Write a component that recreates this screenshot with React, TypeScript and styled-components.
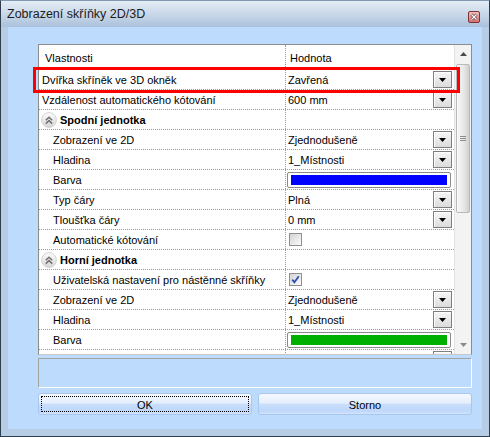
import * as React from 'react'
import styled, { createGlobalStyle } from 'styled-components'

const GlobalStyle = createGlobalStyle`
  html, body {
    margin: 0;
    padding: 0;
  }
  body {
    width: 490px;
    height: 437px;
    overflow: hidden;
    font-family: 'Liberation Sans', Arial, sans-serif;
    font-size: 11px;
    color: #000;
  }
`

type Value =
  | { type: 'select'; text: string }
  | { type: 'color'; color: string }
  | { type: 'check'; checked: boolean }
  | { type: 'none' }

type RowKind = 'top' | 'section' | 'sub'

type RowData = { kind: RowKind; label: string; value: Value }

// the last row is scrolled off: only the top of its drop-down shows
const rows: RowData[] = [
  { kind: 'top', label: 'Dvířka skříněk ve 3D okněk', value: { type: 'select', text: 'Zavřená' } },
  { kind: 'top', label: 'Vzdálenost automatického kótování', value: { type: 'select', text: '600 mm' } },
  { kind: 'section', label: 'Spodní jednotka', value: { type: 'none' } },
  { kind: 'sub', label: 'Zobrazení ve 2D', value: { type: 'select', text: 'Zjednodušeně' } },
  { kind: 'sub', label: 'Hladina', value: { type: 'select', text: '1_Místnosti' } },
  { kind: 'sub', label: 'Barva', value: { type: 'color', color: '#0000ff' } },
  { kind: 'sub', label: 'Typ čáry', value: { type: 'select', text: 'Plná' } },
  { kind: 'sub', label: 'Tloušťka čáry', value: { type: 'select', text: '0 mm' } },
  { kind: 'sub', label: 'Automatické kótování', value: { type: 'check', checked: false } },
  { kind: 'section', label: 'Horní jednotka', value: { type: 'none' } },
  { kind: 'sub', label: 'Uživatelská nastavení pro nástěnné skříňky', value: { type: 'check', checked: true } },
  { kind: 'sub', label: 'Zobrazení ve 2D', value: { type: 'select', text: 'Zjednodušeně' } },
  { kind: 'sub', label: 'Hladina', value: { type: 'select', text: '1_Místnosti' } },
  { kind: 'sub', label: 'Barva', value: { type: 'color', color: '#00b000' } },
  { kind: 'sub', label: '', value: { type: 'select', text: '' } },
]

const Window = styled.div`
  position: relative;
  box-sizing: border-box;
  width: 490px;
  height: 437px;
  border: 1px solid #2e3e4e;
  border-top-color: #8198b0;
  background: #b7cde5;
  display: flex;
  flex-direction: column;
`

const TitleBar = styled.div`
  flex: none;
  height: 26px;
  display: flex;
  align-items: flex-start;
  justify-content: space-between;
  padding: 0 9px 0 6px;
  background: linear-gradient(#e4ecf5, #c6d6e8 55%, #a9c1db);
  color: #1c1c1c;
  font-size: 12.5px;
`

const Title = styled.span`
  margin-top: 6px;
`

const CloseBtn = styled.div`
  margin-top: 10px;
  width: 12px;
  height: 12px;
  display: flex;
`

const Client = styled.div`
  flex: 1;
  margin: 0 7px 7px;
  padding: 17px 10px 14px 30px;
  background: #bddbfd;
  display: flex;
  flex-direction: column;
  min-height: 0;
`

const Grid = styled.div`
  flex: none;
  height: 311px;
  box-sizing: border-box;
  border: 1px solid #8c8c8c;
  border-bottom-color: #c8c8c8;
  background: #fff;
  display: flex;
  overflow: hidden;
`

const GridBody = styled.div`
  flex: 1;
  display: flex;
  flex-direction: column;
  overflow: hidden;
`

const Row = styled.div<{ $header?: boolean }>`
  flex: none;
  box-sizing: border-box;
  height: ${(p) => (p.$header ? 25 : 20)}px;
  display: flex;
  border-bottom: 1px dotted #9a9a9a;
`

const LabelCell = styled.div<{ $kind: RowKind }>`
  flex: none;
  box-sizing: border-box;
  width: 247px;
  display: flex;
  align-items: center;
  gap: 3px;
  border-right: 1px dotted #9a9a9a;
  padding-left: ${(p) => (p.$kind === 'sub' ? 14 : p.$kind === 'section' ? 2 : 3)}px;
  font-weight: ${(p) => (p.$kind === 'section' ? 700 : 400)};
  white-space: nowrap;
  overflow: hidden;
`

const HeaderLabel = styled.span`
  padding-left: 3px;
  padding-top: 2px;
`

const ValueCell = styled.div`
  flex: 1;
  display: flex;
  align-items: center;
  justify-content: space-between;
  padding: 0 2px 0 1px;
  min-width: 0;
`

const ValueText = styled.span`
  padding-left: 1px;
`

const DropBtn = styled.div`
  flex: none;
  box-sizing: border-box;
  width: 19px;
  height: 17px;
  margin-left: auto;
  display: flex;
  align-items: center;
  justify-content: center;
  border: 1px solid #7e7e7e;
  box-shadow: inset 1px 1px #fdfdfd;
  background: linear-gradient(#f6f6f6, #dcdcdc);
`

const Swatch = styled.div`
  flex: 1;
  box-sizing: border-box;
  height: 16px;
  margin-right: 1px;
  padding: 2px 3px;
  border: 1px solid #8a8a8a;
  border-radius: 2px;
  background: #fff;
  display: flex;
`

const SwatchFill = styled.div<{ $color: string }>`
  flex: 1;
  background: ${(p) => p.$color};
`

const CheckBox = styled.div`
  box-sizing: border-box;
  width: 13px;
  height: 13px;
  margin-left: 2px;
  border: 1px solid #8f8f8f;
  background: linear-gradient(135deg, #d4d4d4, #fbfbfb);
  display: flex;
  align-items: center;
  justify-content: center;
`

const ScrollBar = styled.div`
  flex: none;
  width: 17px;
  box-sizing: border-box;
  border-left: 1px solid #e3e3e3;
  background: #f3f3f3;
  display: flex;
  flex-direction: column;
`

const ScrollArrow = styled.div`
  flex: none;
  height: 18px;
  display: flex;
  align-items: center;
  justify-content: center;
`

const Thumb = styled.div`
  flex: none;
  box-sizing: border-box;
  height: 149px;
  width: 14px;
  margin: 1px 0 0 1px;
  border: 1px solid #b9b9b9;
  border-radius: 2px;
  background: linear-gradient(90deg, #fafafa, #e6e6e6 60%, #cfcfcf);
  display: flex;
  align-items: center;
  justify-content: center;
`

const ScrollSpacer = styled.div`
  flex: 1;
`

const InfoPanel = styled.div`
  flex: none;
  height: 30px;
  margin-top: 3px;
  box-sizing: border-box;
  border: 1px solid;
  border-color: #a3a3a3 #fff #fff #a3a3a3;
`

const ButtonRow = styled.div`
  flex: none;
  margin-top: 5px;
  height: 22px;
  display: flex;
  gap: 6px;
`

const Button = styled.div<{ $focused?: boolean }>`
  position: relative;
  flex: 1;
  box-sizing: border-box;
  display: flex;
  align-items: center;
  justify-content: center;
  border: 1px solid #a9c7ee;
  border-radius: 3px;
  background: linear-gradient(#f6f9ff 0%, #e4eefc 45%, #c8defb 52%, #bed7fa 85%, #d3e4fc 100%);
  font-size: 11px;
  padding-top: 1px;

  &::after {
    content: '';
    display: ${(p) => (p.$focused ? 'block' : 'none')};
    position: absolute;
    inset: 2px;
    border: 1px dotted #000;
  }
`

const Highlight = styled.div`
  position: absolute;
  left: 32px;
  top: 66px;
  width: 427px;
  height: 26px;
  box-sizing: border-box;
  border: 3px solid #ff0000;
  pointer-events: none;
`

const Arrow = ({ color = '#000' }: { color?: string }) => (
  <svg width="7" height="4" viewBox="0 0 7 4">
    <path d="M0 0H7L3.5 4Z" fill={color} />
  </svg>
)

const SectionIcon = () => (
  <svg width="16" height="16" viewBox="0 0 16 16">
    <defs>
      <linearGradient id="secg" x1="0" y1="0" x2="0" y2="1">
        <stop offset="0" stopColor="#fdfdfd" />
        <stop offset="1" stopColor="#d6d6d6" />
      </linearGradient>
    </defs>
    <circle cx="8" cy="8" r="7.4" fill="url(#secg)" stroke="#d2d2d2" strokeWidth="1" />
    <path d="M4.8 8.2L8 5.2L11.2 8.2M4.8 11.6L8 8.6L11.2 11.6" fill="none" stroke="#707070" strokeWidth="1.5" />
  </svg>
)

const CloseIcon = () => (
  <svg width="12" height="12" viewBox="0 0 12 12">
    <defs>
      <linearGradient id="clg" x1="0" y1="0" x2="0" y2="1">
        <stop offset="0" stopColor="#f3c2c2" />
        <stop offset="1" stopColor="#d57070" />
      </linearGradient>
    </defs>
    <rect x="0.5" y="0.5" width="11" height="11" rx="1.5" fill="url(#clg)" stroke="#7d3434" />
    <path d="M3.5 3.5L8.5 8.5M8.5 3.5L3.5 8.5" stroke="#6a3030" strokeWidth="2.6" />
    <path d="M3.5 3.5L8.5 8.5M8.5 3.5L3.5 8.5" stroke="#fff" strokeWidth="1.3" />
  </svg>
)

const Grip = () => (
  <svg width="6" height="5" viewBox="0 0 6 5">
    <path d="M0 0.5H6M0 2.5H6M0 4.5H6" stroke="#8d8d8d" strokeWidth="1" />
  </svg>
)

const ValueView = ({ value }: { value: Value }) => {
  switch (value.type) {
    case 'select':
      return (
        <>
          {value.text && <ValueText>{value.text}</ValueText>}
          <DropBtn>
            <Arrow />
          </DropBtn>
        </>
      )
    case 'color':
      return (
        <Swatch>
          <SwatchFill $color={value.color} />
        </Swatch>
      )
    case 'check':
      return (
        <CheckBox>
          {value.checked && (
            <svg width="11" height="11" viewBox="0 0 11 11">
              <path d="M2.2 5.6L4.4 8.2L8.8 2.2" fill="none" stroke="#2d4fae" strokeWidth="1.8" />
            </svg>
          )}
        </CheckBox>
      )
    default:
      return null
  }
}

export default function App() {
  return (
    <Window>
      <GlobalStyle />
      <TitleBar>
        <Title>Zobrazení skříňky 2D/3D</Title>
        <CloseBtn>
          <CloseIcon />
        </CloseBtn>
      </TitleBar>
      <Client>
        <Grid>
          <GridBody>
            <Row $header>
              <LabelCell $kind="top">
                <HeaderLabel>Vlastnosti</HeaderLabel>
              </LabelCell>
              <ValueCell>
                <HeaderLabel>Hodnota</HeaderLabel>
              </ValueCell>
            </Row>
            {rows.map((r, i) => (
              <Row key={i}>
                <LabelCell $kind={r.kind}>
                  {r.kind === 'section' && <SectionIcon />}
                  {r.label}
                </LabelCell>
                <ValueCell>
                  <ValueView value={r.value} />
                </ValueCell>
              </Row>
            ))}
          </GridBody>
          <ScrollBar>
            <ScrollArrow>
              <svg width="7" height="4" viewBox="0 0 7 4">
                <path d="M0 4H7L3.5 0Z" fill="#4a4a4a" />
              </svg>
            </ScrollArrow>
            <Thumb>
              <Grip />
            </Thumb>
            <ScrollSpacer />
            <ScrollArrow>
              <Arrow color="#8a8a8a" />
            </ScrollArrow>
          </ScrollBar>
        </Grid>
        <InfoPanel />
        <ButtonRow>
          <Button $focused>OK</Button>
          <Button>Storno</Button>
        </ButtonRow>
      </Client>
      <Highlight />
    </Window>
  )
}
